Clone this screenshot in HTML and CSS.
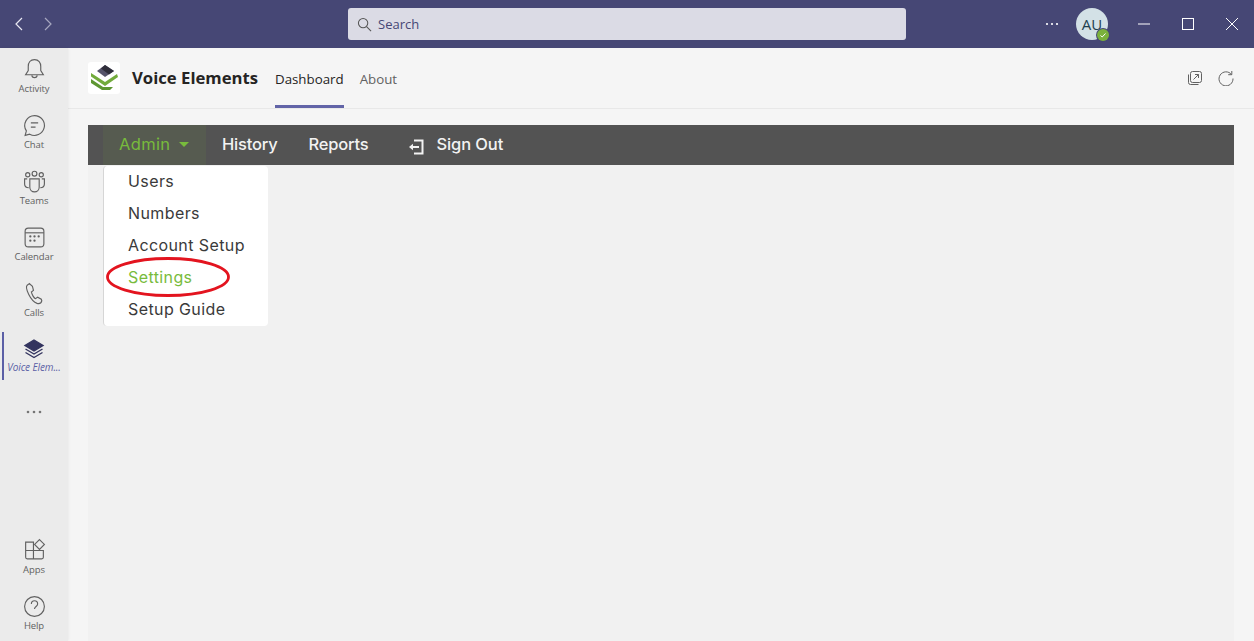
FILE: index.html
```html
<!DOCTYPE html>
<html lang="en">
<head>
<meta charset="utf-8">
<title>Voice Elements</title>
<link rel="stylesheet" href="styles.css">
</head>
<body>
<div class="app">
  <header class="titlebar">
    <div class="nav-arrows">
      <svg class="arrow" viewBox="0 0 12 16"><path d="M9 2 3 8l6 6"/></svg>
      <svg class="arrow dim" viewBox="0 0 12 16"><path d="M3 2l6 6-6 6"/></svg>
    </div>
    <div class="search">
      <svg class="search-icon" viewBox="0 0 16 16"><circle cx="6.500" cy="6.500" r="5"/><path d="M10.200 10.200 15 15"/></svg>
      <span>Search</span>
    </div>
    <div class="title-right">
      <svg class="more" viewBox="0 0 14 4"><circle cx="2" cy="2" r="1.100"/><circle cx="7" cy="2" r="1.100"/><circle cx="12" cy="2" r="1.100"/></svg>
      <div class="avatar">AU
        <span class="presence"><svg viewBox="0 0 8 8"><path d="M1.500 4.500 3.200 6 6.500 2.500"/></svg></span>
      </div>
      <div class="winctl">
        <svg viewBox="0 0 12 12"><path d="M0 6h12"/></svg>
        <svg viewBox="0 0 12 12"><rect x=".5" y=".5" width="11" height="11"/></svg>
        <svg viewBox="0 0 12 12"><path d="M0 0l12 12M12 0 0 12"/></svg>
      </div>
    </div>
  </header>
  <div class="body">
    <nav class="rail">
      <div class="rail-top">
        <a class="rail-item"><svg viewBox="0 0 24 24"><path d="M12 2.500c-4 0-6 3-6 6.500v4l-2.500 4h17L18 13V9c0-3.500-2-6.500-6-6.500z"/><path d="M9.500 17.500c0 3 5 3 5 0"/></svg><span>Activity</span></a>
        <a class="rail-item"><svg viewBox="0 0 24 24"><path d="M12 2.500a9.500 9.500 0 1 1-4.600 17.800L3 21.500l1.200-4.300A9.500 9.500 0 0 1 12 2.500z"/><path d="M8.500 9.500h7M8.500 13.500h4.500"/></svg><span>Chat</span></a>
        <a class="rail-item"><svg viewBox="0 0 24 24"><circle cx="12" cy="4.500" r="2.300"/><circle cx="5.500" cy="5.500" r="2"/><circle cx="18.500" cy="5.500" r="2"/><path d="M7.500 9.500h9v8a4.500 4.500 0 0 1-9 0z"/><path d="M5 9.500H2.500v5c0 2 1.500 3.500 4 3.500M19 9.500h2.500v5c0 2-1.500 3.500-4 3.500"/></svg><span>Teams</span></a>
        <a class="rail-item"><svg viewBox="0 0 24 24"><rect x="3" y="3" width="18" height="18" rx="3"/><path d="M3 7.500h18"/><path class="dots" d="M8 11h.01M12 11h.01M16 11h.01M8 15h.01M12 15h.01"/></svg><span>Calendar</span></a>
        <a class="rail-item"><svg viewBox="0 0 24 24"><path d="M7 2.500 5 4c-1.500 1.500-.5 5 1.500 9s5 7.500 8 8.500c2 .5 4-.5 4.500-2.500l-.5-1.500-3.500-2-2 1.500c-1.500-.5-3.500-4-4-6.500l2-1.500L10 5z"/></svg><span>Calls</span></a>
        <a class="rail-item active">
          <svg viewBox="0 0 24 24"><path class="solid" d="M12 3l9 5.500-9 5.500-9-5.500z"/><path d="M3.500 12 12 17l8.500-5M3.500 15.500 12 20.500l8.500-5"/></svg>
          <span>Voice Elem...</span>
        </a>
        <svg class="rail-more" viewBox="0 0 16 4"><circle cx="2" cy="2" r="1.300"/><circle cx="8" cy="2" r="1.300"/><circle cx="14" cy="2" r="1.300"/></svg>
      </div>
      <div class="rail-bottom">
        <a class="rail-item"><svg viewBox="0 0 24 24"><path d="M3.500 4h7.500v16H5a1.500 1.500 0 0 1-1.500-1.500zM3.500 12h17v6.500A1.500 1.500 0 0 1 19 20h-8"/><path d="M16.800 1.500l4.700 4.700-4.700 4.700-4.700-4.700z"/></svg><span>Apps</span></a>
        <a class="rail-item last"><svg viewBox="0 0 24 24"><circle cx="12" cy="12" r="9.500"/><path d="M9 9.500c0-4 6-4 6 0 0 2.500-3 2.500-3 5"/><path d="M12 17.500h.01"/></svg><span>Help</span></a>
      </div>
    </nav>
    <main class="main">
      <div class="apphead">
        <div class="logo">
          <svg viewBox="0 0 32 32">
            <path fill="#55536a" d="M17 3l9 6-9 6-8-6z"/>
            <path fill="#2f2e3a" d="M17 3l9 6-5 3.500-8-6z"/>
            <path fill="#72ab3c" d="M3 11l14 9 12-8 1 3-13 9-14-9.500z"/>
            <path fill="#5d9632" d="M3 17l12 8h10l-3 3h-8L3 21z"/>
          </svg>
        </div>
        <div class="appname">Voice Elements</div>
        <div class="tabs">
          <a class="tab current">Dashboard</a>
          <a class="tab">About</a>
        </div>
        <div class="head-actions">
          <svg viewBox="0 0 16 16"><rect x="3.500" y="1.500" width="11" height="11" rx="2"/><path d="M1.500 4.500v8a2 2 0 0 0 2 2h8M6.500 9.500 11.500 4.500M8 4.500h3.500V8"/></svg>
          <svg viewBox="0 0 16 16"><path d="M13.500 4.500A7 7 0 1 0 15 8.500M13.800 1v3.700h-3.600"/></svg>
        </div>
      </div>
      <div class="content">
        <div class="menubar">
          <a class="menu-link admin">Admin<i class="caret"></i></a>
          <a class="menu-link">History</a>
          <a class="menu-link">Reports</a>
          <a class="menu-link signout">
            <svg viewBox="0 0 18 16"><path d="M6 1.500h8.500v13H6"/><path d="M11 8H3"/><path class="head" d="M1 8l4-3.200v6.400z"/></svg>
            Sign Out
          </a>
          <div class="dropdown">
            <a>Users</a>
            <a>Numbers</a>
            <a>Account Setup</a>
            <a class="selected">Settings</a>
            <a>Setup Guide</a>
          </div>
          <svg class="ring" viewBox="0 0 126 42"><ellipse cx="63" cy="21" rx="60.500" ry="18.500"/></svg>
        </div>
      </div>
    </main>
  </div>
</div>
</body>
</html>
```

FILE: styles.css
```css
* { box-sizing: border-box; }
html, body { margin: 0; height: 100%; overflow: hidden; }
body { font-family: "Open Sans", "Noto Sans", sans-serif; background: #f5f5f5; color: #252423; }
a { display: block; text-decoration: none; color: inherit; }
svg { fill: none; stroke: currentColor; display: block; }

.app { width: 1254px; height: 641px; display: flex; flex-direction: column; }

.titlebar { height: 48px; flex: none; background: #464775; display: flex; align-items: center; position: relative; }
.nav-arrows { display: flex; gap: 17px; padding-left: 13px; color: #e8e8f2; }
.arrow { width: 12px; height: 16px; stroke-width: 1.200; }
.arrow.dim { opacity: .6; }
.search { position: absolute; left: 348px; top: 8px; width: 558px; height: 32px; background: #dbdbe5; border-radius: 3px; display: flex; align-items: center; padding-left: 9px; gap: 6px; font-size: 13px; color: #464775; }
.search-icon { width: 15px; height: 15px; color: #555; stroke-width: 1.100; }
.title-right { margin-left: auto; display: flex; align-items: center; color: #fff; }
.more { width: 14px; height: 4px; margin-right: 17px; fill: #fff; stroke: none; }
.avatar { width: 32px; height: 32px; border-radius: 50%; background: #d3e1e6; color: #21404e; font-size: 15px; display: flex; align-items: center; justify-content: center; position: relative; }
.presence { position: absolute; right: -1px; bottom: -1px; width: 12px; height: 12px; border-radius: 50%; background: #7bb13c; box-shadow: 0 0 0 1px #464775; color: #fff; display: flex; align-items: center; justify-content: center; }
.presence svg { width: 8px; height: 8px; stroke-width: 1; }
.winctl { display: flex; gap: 32px; margin-left: 30px; padding-right: 16px; }
.winctl svg { width: 12px; height: 12px; stroke-width: 1; }

.body { flex: 1; display: flex; min-height: 0; }
.rail { width: 68px; flex: none; background: #ebebeb; box-shadow: 0 0 3px rgba(0,0,0,.08); display: flex; flex-direction: column; justify-content: space-between; position: relative; z-index: 1; }
.rail-top { padding-top: 8px; }
.rail-item { height: 56px; display: flex; flex-direction: column; align-items: center; padding-top: 1px; color: #616161; position: relative; }
.rail-item svg { width: 25px; height: 25px; stroke-width: 1.100; flex: none; }
.rail-item span { font-size: 9.500px; line-height: 13px; letter-spacing: -.1px; white-space: nowrap; }
.rail-item .dots { stroke-width: 2.200; stroke-linecap: round; }
.rail-item.last { height: 48px; }
.rail-item.active { height: 48px; padding-top: 0; margin-top: -4px; color: #33345f; }
.rail-item.active::before { content: ""; position: absolute; left: 2px; top: 0; bottom: 0; width: 2px; background: #5b5fa6; }
.rail-item.active svg { width: 24px; height: 24px; margin-top: 5px; stroke-width: 1.400; }
.rail-item.active .solid { fill: currentColor; }
.rail-item.active span { font-style: italic; color: #5b5fa6; font-size: 10px; }
.rail-more { width: 16px; height: 4px; margin: 30px 0 0 26px; fill: #757575; stroke: none; }

.main { flex: 1; min-width: 0; display: flex; flex-direction: column; }
.apphead { height: 61px; flex: none; border-bottom: 1px solid #e8e8e8; background: #f5f5f5; display: flex; align-items: center; padding-left: 20px; }
.logo { width: 32px; height: 32px; background: #fff; border-radius: 3px; margin-top: -1px; }
.logo svg { stroke: none; width: 32px; height: 32px; }
.appname { font-size: 16.700px; font-weight: 700; margin: -2px 0 0 12px; color: #252423; width: 143px; white-space: nowrap; }
.tabs { display: flex; height: 100%; gap: 16px; }
.tab { font-size: 13.300px; color: #616161; height: 60px; line-height: 63px; }
.tab.current { color: #252423; font-weight: 500; border-bottom: 3px solid #6264a7; }
.head-actions { margin-left: auto; display: flex; gap: 15px; padding-right: 20px; color: #616161; }
.head-actions svg { width: 16px; height: 16px; stroke-width: 1; }

.content { flex: 1; margin: 16px 20px 0; background: #f1f1f1; }
.menubar { height: 40px; background: #535353; display: flex; align-items: center; position: relative; padding-left: 15px; }
.menu-link { font-family: "Inter", "Open Sans", sans-serif; font-size: 16.500px; font-weight: 500; color: #f2f2f2; letter-spacing: -.2px; line-height: 38px; padding-bottom: 2px; margin-right: 31px; white-space: nowrap; }
.menu-link.admin { color: #78bb3c; background: #565b50; width: 103px; height: 40px; padding-left: 16px; margin-right: 16px; font-weight: 400; letter-spacing: .35px; display: flex; align-items: center; }
.caret { width: 0; height: 0; border-left: 5px solid transparent; border-right: 5px solid transparent; border-top: 5px solid #78bb3c; margin: 0 0 0 9px; }
.signout { display: flex; align-items: center; gap: 10px; margin-left: 9px; letter-spacing: -.1px; }
.signout svg { width: 18px; height: 16px; stroke-width: 2; margin-top: 6px; }
.signout .head { fill: currentColor; stroke: none; }
.dropdown { position: absolute; left: 15px; top: 41px; width: 165px; height: 160px; background: #fff; border-radius: 4px; border-left: 1px solid #d6d6d6; padding: 0 0 0 24px; font-family: "Inter", "Open Sans", sans-serif; font-size: 16px; color: #3a3a3a; letter-spacing: .4px; z-index: 2; }
.dropdown a { height: 32px; line-height: 30px; white-space: nowrap; }
.dropdown .selected { color: #78bb3c; }
.ring { position: absolute; left: 17px; top: 131px; width: 126px; height: 42px; color: #e3141f; stroke-width: 2.800; z-index: 3; }
```
